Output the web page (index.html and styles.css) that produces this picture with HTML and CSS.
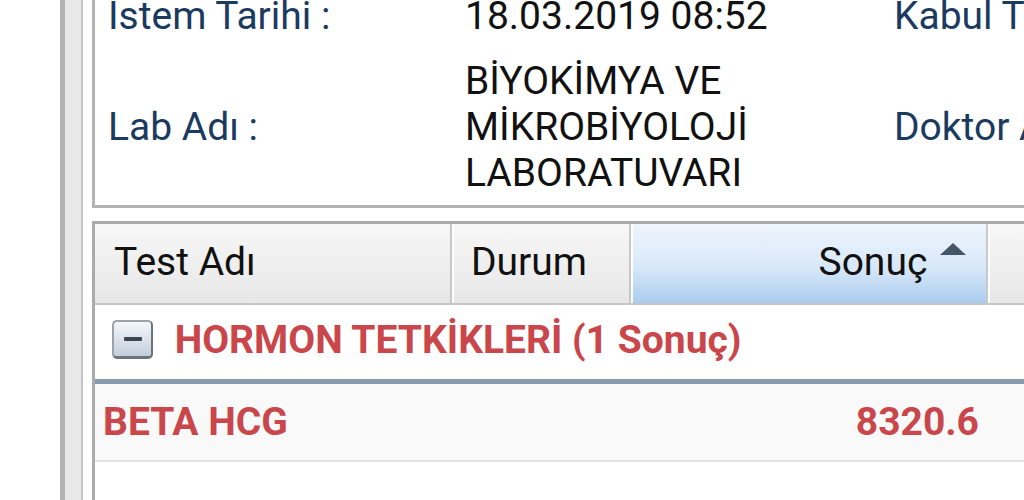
FILE: index.html
```html
<!DOCTYPE html>
<html lang="tr">
<head>
  <meta charset="UTF-8" />
  <meta name="viewport" content="width=device-width, initial-scale=1.0"/>
  <title>Tetkik Sonuçları</title>
  <link rel="stylesheet" href="styles.css">
</head>
<body>

  <div class="page">
    <!-- left rail of the outer panel -->
    <div class="rail"></div>

    <div class="main">
      <!-- request info -->
      <table class="info">
        <colgroup>
          <col class="c-label">
          <col class="c-value">
          <col class="c-label2">
        </colgroup>
        <tr>
          <td class="lbl">Istem Tarihi :</td>
          <td class="val">18.03.2019 08:52</td>
          <td class="lbl">Kabul Tarihi :</td>
        </tr>
        <tr>
          <td class="lbl">Lab Adı :</td>
          <td class="val">BİYOKİMYA VE MİKROBİYOLOJİ LABORATUVARI</td>
          <td class="lbl">Doktor Adı :</td>
        </tr>
      </table>

      <!-- results grid -->
      <div class="grid-box">
        <table class="grid">
          <colgroup>
            <col class="g-name">
            <col class="g-status">
            <col class="g-result">
            <col class="g-rest">
          </colgroup>
          <thead>
            <tr>
              <th>Test Adı</th>
              <th>Durum</th>
              <th class="sorted">Sonuç <span class="sort-up"></span></th>
              <th></th>
            </tr>
          </thead>
          <tbody>
            <tr class="group">
              <td colspan="4">
                <span class="toggle"><span class="minus"></span></span>
                <span class="group-title">HORMON TETKİKLERİ (1 Sonuç)</span>
              </td>
            </tr>
            <tr class="row">
              <td class="test">BETA HCG</td>
              <td></td>
              <td class="result">8320.6</td>
              <td></td>
            </tr>
          </tbody>
        </table>
      </div>
    </div>
  </div>

</body>
</html>
```

FILE: styles.css
```css
* { margin: 0; padding: 0; box-sizing: border-box; }
html, body { overflow: hidden; }
body {
  font-family: Roboto, "Noto Sans", sans-serif;
  font-size: 39px;
  line-height: 46px;
  background: #fff;
  color: #111;
  height: 500px;
}
.page {
  display: flex;
  align-items: stretch;
  height: 500px;
  padding-left: 60px;
}
.rail {
  flex: 0 0 23px;
  background: #e9e9e9;
  border-left: 5px solid #b4b4b4;
  border-right: 2px solid #c4c4c4;
}
.main {
  flex: 0 0 1100px;
  margin-left: 9px;
}

/* info box */
.info {
  width: 1100px;
  table-layout: fixed;
  border-collapse: separate;
  border-spacing: 0;
  border: 3px solid #b3b3b3;
  border-top: none;
  margin-top: -17px;
}
.c-label { width: 357px; }
.c-value { width: 429px; }
.c-label2 { width: 314px; }
.info td {
  padding: 10px 13px 9px;
  vertical-align: middle;
}
.info .lbl {
  color: #1b3a5f;
  white-space: nowrap;
}
.info .val { color: #111; }

/* results grid */
.grid-box {
  margin-top: 13px;
  width: 1100px;
  height: 300px;
  border: 3px solid #ababab;
  border-bottom: none;
}
.grid {
  width: 100%;
  table-layout: fixed;
  border-collapse: separate;
  border-spacing: 0;
}
.g-name { width: 357px; }
.g-status { width: 179px; }
.g-result { width: 357px; }
.grid th {
  height: 81px;
  font-weight: 400;
  text-align: left;
  padding: 0 19px 4px;
  vertical-align: middle;
  background: linear-gradient(#f7f7f7, #e7e7e7);
  border-right: 2px solid #c8c8c8;
  border-bottom: 2px solid #c6c6c6;
  box-shadow: inset 2px 0 #fff;
  white-space: nowrap;
}
.grid th:first-child { box-shadow: none; padding-left: 19px; }
.grid th.sorted {
  text-align: right;
  padding-right: 20px;
  background: linear-gradient(#eef5fd, #d8e8f9 55%, #aaccef);
}
.sort-up {
  display: inline-block;
  width: 0;
  height: 0;
  margin-left: 3px;
  vertical-align: 20px;
  border-left: 13px solid transparent;
  border-right: 13px solid transparent;
  border-bottom: 12px solid #465667;
}

.group td {
  height: 79px;
  padding: 0 17px 8px;
  vertical-align: middle;
  background: #fff;
  border-bottom: 5px solid #8999ae;
}
.toggle {
  display: inline-flex;
  align-items: center;
  justify-content: center;
  width: 41px;
  height: 39px;
  vertical-align: middle;
  margin-right: 12px;
  border: 2px solid #6b737e;
  border-top-color: #9aa2ac;
  border-left-color: #9aa2ac;
  border-bottom-width: 3px;
  border-radius: 5px;
  background: linear-gradient(#f4f7fb, #c3cedb);
}
.minus {
  width: 18px;
  height: 4px;
  background: #3c4652;
  border-radius: 1px;
}
.group-title {
  color: #c9474b;
  font-weight: 700;
  vertical-align: middle;
}

.row td {
  height: 78px;
  vertical-align: middle;
  background: #f9f9f9;
  border-bottom: 2px solid #e3e3e3;
  color: #c9474b;
  font-weight: 700;
}
.row .test { padding-left: 8px; white-space: nowrap; }
.row .result { text-align: right; padding-right: 9px; }
```
